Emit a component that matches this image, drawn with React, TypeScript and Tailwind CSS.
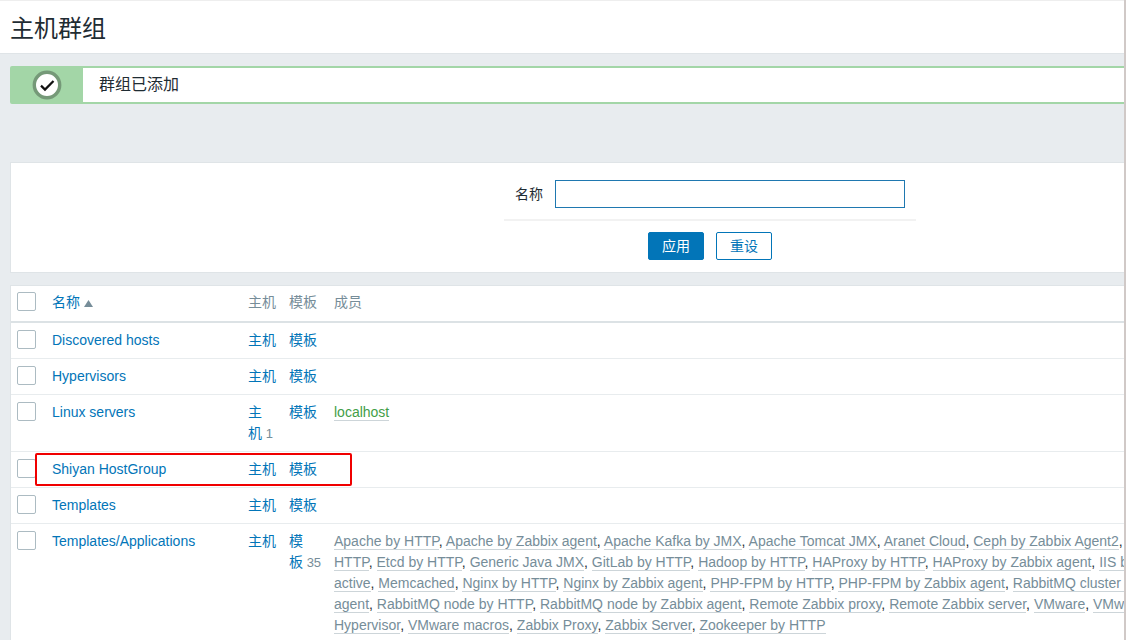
import { Fragment } from "react";

interface HostGroup {
  name: string;
  hosts?: number;
  templates?: number;
  members?: string[];
  enabled?: boolean;
  marked?: boolean;
}

const APPLICATION_TEMPLATES = [
  "Apache by HTTP",
  "Apache by Zabbix agent",
  "Apache Kafka by JMX",
  "Apache Tomcat JMX",
  "Aranet Cloud",
  "Ceph by Zabbix Agent2",
  "Docker",
  "Elasticsearch Cluster by HTTP",
  "Etcd by HTTP",
  "Generic Java JMX",
  "GitLab by HTTP",
  "Hadoop by HTTP",
  "HAProxy by HTTP",
  "HAProxy by Zabbix agent",
  "IIS by Zabbix agent",
  "IIS by Zabbix agent active",
  "Memcached",
  "Nginx by HTTP",
  "Nginx by Zabbix agent",
  "PHP-FPM by HTTP",
  "PHP-FPM by Zabbix agent",
  "RabbitMQ cluster by HTTP",
  "RabbitMQ cluster by Zabbix agent",
  "RabbitMQ node by HTTP",
  "RabbitMQ node by Zabbix agent",
  "Remote Zabbix proxy",
  "Remote Zabbix server",
  "VMware",
  "VMware FQDN",
  "VMware Guest",
  "VMware Hypervisor",
  "VMware macros",
  "Zabbix Proxy",
  "Zabbix Server",
  "Zookeeper by HTTP",
];

const GROUPS: HostGroup[] = [
  { name: "Discovered hosts" },
  { name: "Hypervisors" },
  { name: "Linux servers", hosts: 1, members: ["localhost"], enabled: true },
  { name: "Shiyan HostGroup", marked: true },
  { name: "Templates" },
  { name: "Templates/Applications", templates: 35, members: APPLICATION_TEMPLATES },
];

function Checkbox({ label }: { label: string }) {
  return (
    <input
      type="checkbox"
      aria-label={label}
      className="block size-[19px] appearance-none rounded-xs border border-[#acbbc2] bg-white checked:bg-[#0275b8]"
    />
  );
}

function CountLink({ label, count }: { label: string; count?: number }) {
  return (
    <>
      <a href="#" className="text-[#0275b8]">
        {label}
      </a>
      {count !== undefined && <span className="text-[13px] text-[#768d99]">&nbsp;{count}</span>}
    </>
  );
}

function Message() {
  return (
    <div className="flex h-[38px] rounded-xs border-2 border-[#a3d6a7] bg-white">
      <div className="flex w-[71px] items-center justify-center bg-[#a3d6a7] pr-[2px]">
        <svg width="30" height="30" viewBox="0 0 30 30" fill="none">
          <circle cx="15" cy="15" r="12.7" fill="#fff" stroke="#759978" strokeWidth="3.4" />
          <path d="M9 15.6l4 4L21.5 11" stroke="#111" strokeWidth="2.2" />
        </svg>
      </div>
      <p className="px-4 text-base leading-[34px]">群组已添加</p>
    </div>
  );
}

function Filter() {
  return (
    <form
      className="mt-[58px] border border-[#dfe4e7] bg-white pt-[17px] pb-3"
      onSubmit={(e) => e.preventDefault()}
    >
      <div className="mx-auto w-[412px]">
        <div className="flex items-center gap-3 border-b-2 border-[#f2f2f2] pr-[11px] pb-[11px] pl-[11px]">
          <label htmlFor="filter-name" className="shrink-0">
            名称
          </label>
          <input
            id="filter-name"
            type="text"
            className="h-7 w-full border border-[#1f78b0] bg-white px-1 outline-none"
          />
        </div>
        <div className="flex justify-center gap-3 pt-[11px]">
          <button type="submit" className="h-7 w-14 rounded-xs border border-[#0275b8] bg-[#0275b8] text-white">
            应用
          </button>
          <button type="reset" className="h-7 w-14 rounded-xs border border-[#0275b8] bg-white text-[#0275b8]">
            重设
          </button>
        </div>
      </div>
    </form>
  );
}

function GroupRow({ group }: { group: HostGroup }) {
  const memberColor = group.enabled ? "text-[#429e47]" : "text-[#768d99]";

  return (
    <tr className="border-b border-[#e8ecee] align-top">
      <td className="py-[7px] pl-[6px]">
        <Checkbox label={group.name} />
      </td>
      <td className="relative py-[7px] pl-[5px]">
        <a href="#" className="text-[#0275b8]">
          {group.name}
        </a>
        {group.marked && (
          <span className="pointer-events-none absolute top-[1px] -left-3 h-[33px] w-[317px] rounded-xs border-2 border-[#f00000]" />
        )}
      </td>
      <td className="py-[7px] pr-[8px] pl-[5px]">
        <CountLink label="主机" count={group.hosts} />
      </td>
      <td className="py-[7px] pr-[8px] pl-[5px]">
        <CountLink label="模板" count={group.templates} />
      </td>
      <td className="py-[7px] pr-10 pl-[5px]">
        {group.members?.map((member, i) => (
          <Fragment key={member}>
            {i > 0 && ", "}
            <a href="#" className={`border-b border-[#cdd5d9] ${memberColor}`}>
              {member}
            </a>
          </Fragment>
        ))}
      </td>
    </tr>
  );
}

function GroupTable() {
  return (
    <div className="mt-3 border border-[#dfe4e7] bg-white">
      <table className="w-full table-fixed border-collapse text-left">
        <colgroup>
          <col className="w-[36px]" />
          <col className="w-[196px]" />
          <col className="w-[41px]" />
          <col className="w-[45px]" />
          <col />
        </colgroup>
        <thead>
          <tr className="h-9 border-b-2 border-[#dce2e5] align-top text-[#768d99]">
            <th className="pt-[6px] pl-[6px]">
              <Checkbox label="全选" />
            </th>
            <th className="pt-[6px] pl-[5px] font-normal">
              <a href="#" className="flex items-center gap-1 text-[#0275b8]">
                名称
                <svg width="9" height="7" viewBox="0 0 9 7" className="mt-[2px]">
                  <path d="M4.5 0L9 7H0z" fill="#768d99" />
                </svg>
              </a>
            </th>
            <th className="pt-[6px] pl-[5px] font-normal">主机</th>
            <th className="pt-[6px] pl-[5px] font-normal">模板</th>
            <th className="pt-[6px] pl-[5px] font-normal">成员</th>
          </tr>
        </thead>
        <tbody>
          {GROUPS.map((group) => (
            <GroupRow key={group.name} group={group} />
          ))}
        </tbody>
      </table>
    </div>
  );
}

export default function App() {
  return (
    <div className="h-screen overflow-hidden border-r-2 border-[#d0c9c7] bg-[#e8ecef] font-['Liberation_Sans','Noto_Sans_CJK_SC',sans-serif] text-sm leading-[21px] text-[#1f2c33]">
      <div className="min-w-[1420px]">
        <header className="border-t border-b border-t-[#eeeeee] border-b-[#dfe4e7] bg-white px-[10px] pt-3 pb-2">
          <h1 className="text-2xl leading-8">主机群组</h1>
        </header>
        <main className="px-[10px] pt-3">
          <Message />
          <Filter />
          <GroupTable />
        </main>
      </div>
    </div>
  );
}
